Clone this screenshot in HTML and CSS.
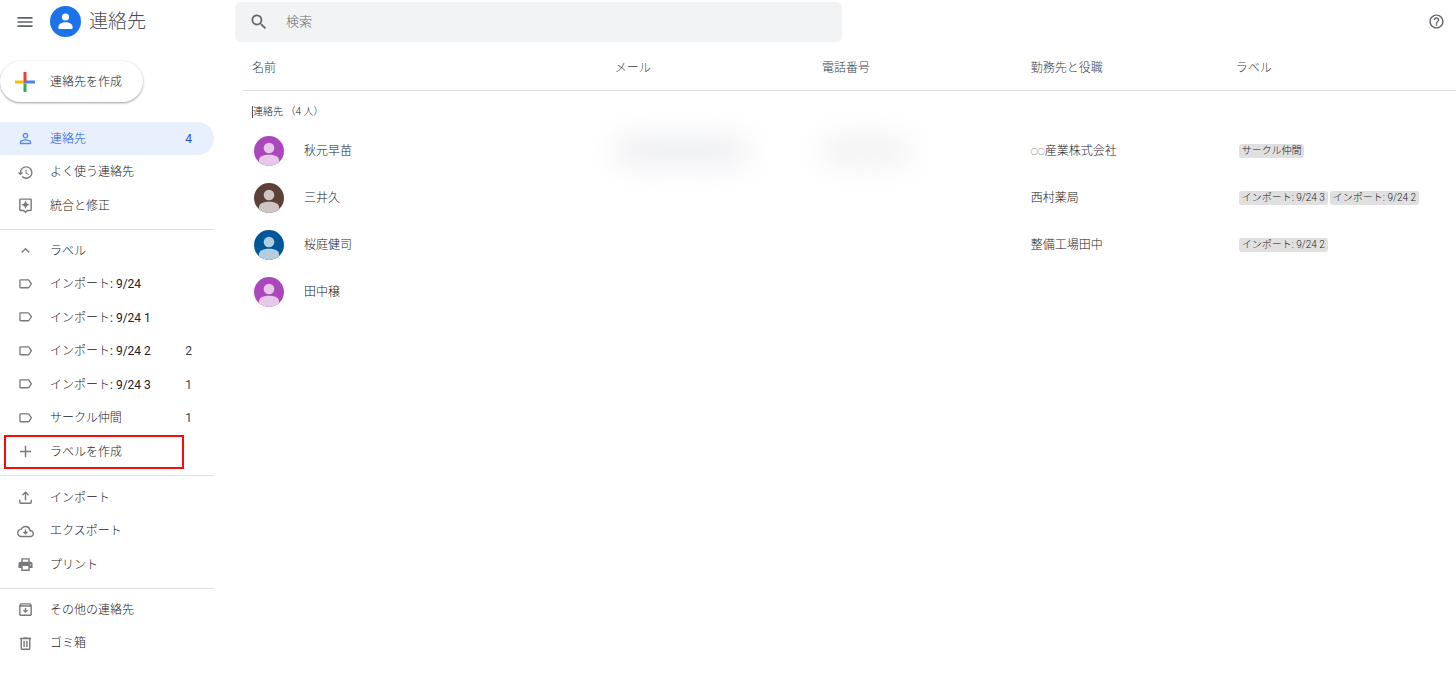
FILE: index.html
```html
<!DOCTYPE html>
<html lang="ja">
<head>
<meta charset="utf-8">
<meta name="viewport" content="width=device-width, initial-scale=1">
<title>連絡先</title>
<link rel="stylesheet" href="styles.css">
</head>
<body>
<svg class="defs" aria-hidden="true">
  <symbol id="label" viewBox="-1 0 26 26"><path d="M4.500 6h11.600a1.500 1.500 0 0 1 1.200.6L21 12l-3.700 5.400a1.500 1.500 0 0 1-1.200.6H4.500a1 1 0 0 1-1-1V7a1 1 0 0 1 1-1z" fill="none" stroke="currentColor" stroke-width="2"/></symbol>
  <symbol id="avatar" viewBox="0 0 30 30"><circle cx="15" cy="12" r="5.300"/><path d="M5 26.200V24c0-3.600 5-5.200 10-5.200s10 1.600 10 5.200v2.200A15 15 0 0 1 5 26.200z"/></symbol>
</svg>

<header class="topbar">
  <div class="brand">
    <button class="icon-button" type="button" aria-label="メインメニュー">
      <svg class="icon-menu" viewBox="0 0 24 24"><path d="M3 18h18v-2H3v2zm0-5h18v-2H3v2zm0-7v2h18V6H3z"/></svg>
    </button>
    <a class="brand-link" href="#">
      <svg class="logo" viewBox="0 0 31 31"><circle cx="15.500" cy="15.500" r="15.500" fill="#1a73e8"/><circle cx="15.500" cy="11" r="3.600" fill="#fff"/><path d="M8.300 21.500c0-3.800 3.700-5.200 7.200-5.200s7.200 1.400 7.200 5.200c0 .9-.5 1.400-1.400 1.400H9.700c-.9 0-1.400-.5-1.400-1.400z" fill="#fff"/></svg>
      <span>連絡先</span>
    </a>
  </div>
  <form class="search" role="search">
    <button class="icon-button" type="button" aria-label="検索">
      <svg class="icon-search" viewBox="0 0 24 24"><path d="M15.500 14h-.79l-.28-.27A6.471 6.471 0 0 0 16 9.500 6.500 6.500 0 1 0 9.500 16c1.610 0 3.090-.59 4.230-1.570l.27.28v.79l5 4.990L20.490 19l-4.990-5zm-6 0C7.010 14 5 11.990 5 9.500S7.010 5 9.500 5 14 7.010 14 9.500 11.990 14 9.500 14z"/></svg>
    </button>
    <input class="search-input" type="text" placeholder="検索" aria-label="検索">
  </form>
  <button class="icon-button help" type="button" aria-label="ヘルプ">
    <svg class="icon" viewBox="0 0 24 24"><path d="M11 18h2v-2h-2v2zm1-16C6.480 2 2 6.480 2 12s4.480 10 10 10 10-4.480 10-10S17.520 2 12 2zm0 18c-4.410 0-8-3.590-8-8s3.590-8 8-8 8 3.590 8 8-3.590 8-8 8zm0-14c-2.210 0-4 1.790-4 4h2c0-1.100.9-2 2-2s2 .9 2 2c0 2-3 1.750-3 5h2c0-2.250 3-2.500 3-5 0-2.210-1.790-4-4-4z"/></svg>
  </button>
</header>

<div class="layout">
  <aside class="sidebar">
    <button class="create" type="button">
      <svg class="plus" viewBox="0 0 20 20"><path fill="#fbbc04" d="M0 8.500h8.500v3H0z"/><path fill="#4285f4" d="M10 8.500h10v3H8.500z"/><path fill="#ea4335" d="M8.500 0h3v8.500l-3 3z"/><path fill="#34a853" d="M8.500 11.500h3V20h-3z"/></svg>
      <span>連絡先を作成</span>
    </button>
    <nav>
      <ul class="section">
        <li><a class="item active" href="#"><svg class="icon" viewBox="0 0 24 24"><path d="M12 5.900a2.100 2.100 0 1 1 0 4.200 2.100 2.100 0 0 1 0-4.200m0 9c2.970 0 6.100 1.460 6.100 2.100v1.100H5.900V17c0-.64 3.130-2.100 6.100-2.100M12 4C9.790 4 8 5.790 8 8s1.790 4 4 4 4-1.790 4-4-1.790-4-4-4zm0 9c-2.670 0-8 1.340-8 4v3h16v-3c0-2.660-5.330-4-8-4z"/></svg><span>連絡先</span><span class="count">4</span></a></li>
        <li><a class="item" href="#"><svg class="icon" viewBox="0 0 24 24"><path d="M13 3a9 9 0 0 0-9 9H1l3.890 3.890.07.14L9 12H6c0-3.870 3.130-7 7-7s7 3.130 7 7-3.130 7-7 7c-1.930 0-3.680-.79-4.940-2.060l-1.420 1.420A8.954 8.954 0 0 0 13 21a9 9 0 0 0 0-18zm-1 5v5l4.280 2.540.72-1.210-3.500-2.080V8H12z"/></svg><span>よく使う連絡先</span></a></li>
        <li><a class="item" href="#"><svg class="icon" viewBox="0 0 24 24"><path d="M19 2H5a2 2 0 0 0-2 2v14c0 1.100.9 2 2 2h4l3 3 3-3h4c1.100 0 2-.9 2-2V4c0-1.100-.9-2-2-2zm0 16h-4.830L12 20.170 9.830 18H5V4h14v14zm-7-1 1.880-4.120L18 11l-4.120-1.880L12 5l-1.880 4.120L6 11l4.120 1.880z"/></svg><span>統合と修正</span></a></li>
      </ul>
      <ul class="section">
        <li><button class="item" type="button" aria-expanded="true"><svg class="icon" viewBox="0 0 24 24"><path d="m12 8-6 6 1.410 1.410L12 10.830l4.590 4.580L18 14z"/></svg><span>ラベル</span></button></li>
        <li><a class="item" href="#"><svg class="icon"><use href="#label"/></svg><span>インポート<b>: 9/24</b></span></a></li>
        <li><a class="item" href="#"><svg class="icon"><use href="#label"/></svg><span>インポート<b>: 9/24 1</b></span></a></li>
        <li><a class="item" href="#"><svg class="icon"><use href="#label"/></svg><span>インポート<b>: 9/24 2</b></span><span class="count">2</span></a></li>
        <li><a class="item" href="#"><svg class="icon"><use href="#label"/></svg><span>インポート<b>: 9/24 3</b></span><span class="count">1</span></a></li>
        <li><a class="item" href="#"><svg class="icon"><use href="#label"/></svg><span>サークル仲間</span><span class="count">1</span></a></li>
        <li><button class="item marked" type="button"><svg class="icon" viewBox="0 0 24 24"><path d="M20 13h-7v7h-2v-7H4v-2h7V4h2v7h7z"/></svg><span>ラベルを作成</span></button></li>
      </ul>
      <ul class="section tools">
        <li><button class="item" type="button"><svg class="icon" viewBox="0 0 24 24"><path d="M11 16V6.800L8.400 9.400 7 8l5-5 5 5-1.400 1.400L13 6.800V16zM3 15h2v4h14v-4h2v4a2 2 0 0 1-2 2H5a2 2 0 0 1-2-2z"/></svg><span>インポート</span></button></li>
        <li><button class="item" type="button"><svg class="icon" viewBox="0 0 24 24"><path d="M19.350 10.040A7.490 7.490 0 0 0 12 4C9.110 4 6.600 5.640 5.350 8.040A5.994 5.994 0 0 0 0 14c0 3.310 2.690 6 6 6h13c2.760 0 5-2.240 5-5 0-2.640-2.050-4.780-4.650-4.960zM19 18H6c-2.210 0-4-1.790-4-4 0-2.050 1.530-3.760 3.560-3.970l1.070-.11.5-.95A5.469 5.469 0 0 1 12 6c2.620 0 4.880 1.860 5.390 4.430l.3 1.500 1.530.11A2.980 2.980 0 0 1 22 15c0 1.650-1.350 3-3 3zM13 9h-2v3.500H8l4 4 4-4h-3z"/></svg><span>エクスポート</span></button></li>
        <li><button class="item" type="button"><svg class="icon" viewBox="0 0 24 24"><path d="M19 8h-1V3H6v5H5c-1.660 0-3 1.340-3 3v6h4v4h12v-4h4v-6c0-1.660-1.340-3-3-3zM8 5h8v3H8V5zm8 14H8v-5h8v5zm2-6.500a1 1 0 1 1 2 0 1 1 0 0 1-2 0z"/></svg><span>プリント</span></button></li>
      </ul>
      <ul class="section">
        <li><a class="item" href="#"><svg class="icon" viewBox="0 0 24 24"><path d="m20.540 5.230-1.390-1.680A1.450 1.450 0 0 0 18 3H6c-.47 0-.88.210-1.160.550L3.460 5.230C3.170 5.570 3 6.020 3 6.500V19c0 1.100.9 2 2 2h14c1.100 0 2-.9 2-2V6.500c0-.48-.17-.93-.46-1.270zM6.240 5h11.520l.83 1H5.420l.82-1zM5 19V8h14v11H5zm8-9h-2v3H8l4 4 4-4h-3z"/></svg><span>その他の連絡先</span></a></li>
        <li><a class="item" href="#"><svg class="icon" viewBox="0 0 24 24"><path d="M15 4V3H9v1H4v2h1v13c0 1.100.9 2 2 2h10c1.100 0 2-.9 2-2V6h1V4h-5zm2 15H7V6h10v13zM9 8h2v9H9zm4 0h2v9h-2z"/></svg><span>ゴミ箱</span></a></li>
      </ul>
    </nav>
  </aside>

  <main class="main">
    <table class="contacts">
      <colgroup><col class="col-name"><col class="col-mail"><col class="col-phone"><col class="col-org"><col></colgroup>
      <thead>
        <tr><th scope="col">名前</th><th scope="col">メール</th><th scope="col">電話番号</th><th scope="col">勤務先と役職</th><th scope="col">ラベル</th></tr>
      </thead>
      <tbody>
        <tr class="group"><th colspan="5" scope="rowgroup"><span class="group-title">連絡先 （4 人）</span></th></tr>
        <tr><td><div class="person"><svg class="avatar purple"><use href="#avatar"/></svg><span>秋元早苗</span></div></td><td><div class="redacted mail"></div></td><td><div class="redacted phone"></div></td><td><span class="circles">○○</span>産業株式会社</td><td><div class="chips"><span class="chip">サークル仲間</span></div></td></tr>
        <tr><td><div class="person"><svg class="avatar brown"><use href="#avatar"/></svg><span>三井久</span></div></td><td></td><td></td><td>西村薬局</td><td><div class="chips"><span class="chip">インポート: 9/24 3</span><span class="chip">インポート: 9/24 2</span></div></td></tr>
        <tr><td><div class="person"><svg class="avatar blue"><use href="#avatar"/></svg><span>桜庭健司</span></div></td><td></td><td></td><td>整備工場田中</td><td><div class="chips"><span class="chip">インポート: 9/24 2</span></div></td></tr>
        <tr><td><div class="person"><svg class="avatar purple"><use href="#avatar"/></svg><span>田中穣</span></div></td><td></td><td></td><td></td><td></td></tr>
      </tbody>
    </table>
  </main>
</div>
</body>
</html>
```

FILE: styles.css
```css
* { box-sizing: border-box; }

body {
  margin: 0;
  background: #fff;
  color: #202124;
  font: 300 12px/18px Roboto, "Noto Sans CJK JP", sans-serif;
}

button, input { font: inherit; color: inherit; }
button { border: 0; padding: 0; background: none; cursor: pointer; }
a { color: inherit; text-decoration: none; }
svg { display: block; flex: none; fill: currentColor; }
.defs { position: absolute; width: 0; height: 0; }
.icon { width: 17px; height: 17px; color: #77797d; }

/* Top bar */
.topbar { display: flex; align-items: center; height: 43px; padding-right: 11px; }
.brand { display: flex; align-items: center; gap: 15px; flex: none; width: 235px; padding-left: 15px; }
.brand-link { display: flex; align-items: center; gap: 8px; font-size: 19px; line-height: 28px; color: #4a4d51; }
.icon-button { color: #5f6368; }
.icon-menu { width: 20px; height: 20px; }
.logo { width: 31px; height: 31px; }
.search {
  display: flex;
  align-items: center;
  gap: 17px;
  flex: 0 1 50%;
  max-width: 607px;
  height: 40px;
  padding-left: 14px;
  border-radius: 6px;
  background: #f1f3f4;
}
.icon-search { width: 20px; height: 20px; }
.search-input { flex: 1; min-width: 0; padding: 0; border: 0; outline: 0; background: none; font-size: 13px; }
.search-input::placeholder { color: #66696d; opacity: 1; }
.help { margin-left: auto; }
.help .icon { color: #5f6368; }

/* Sidebar */
.layout { display: flex; gap: 29px; }
.sidebar { flex: none; width: 214px; padding-top: 18px; }
.create {
  display: flex;
  align-items: center;
  gap: 15px;
  height: 41px;
  margin-bottom: 20px;
  padding: 0 21px 0 15px;
  border-radius: 21px;
  background: #fff;
  box-shadow: 0 1px 2px rgba(60, 64, 67, .35), 0 1px 3px rgba(60, 64, 67, .2);
}
.plus { width: 20px; height: 20px; }
.section { margin: 0; padding: 0; list-style: none; }
.section + .section { margin-top: 7px; padding-top: 4px; border-top: 1px solid #e0e0e0; }
.section + .tools { padding-top: 5px; }
.section li { position: relative; height: 33px; }
.section li:nth-child(even) { height: 34px; }
.item {
  display: flex;
  align-items: center;
  gap: 16px;
  width: 100%;
  height: 100%;
  padding: 0 22px 0 17px;
  border-radius: 0 17px 17px 0;
  text-align: left;
}
.item b { font-weight: 400; }
.count { margin-left: auto; font-weight: 400; color: #3c4043; }
.active, .active .count { color: #1a56d0; }
.active { background: #e8f0fe; }
.active .icon { color: #4f8af0; }
.marked::after {
  content: "";
  position: absolute;
  top: 0;
  bottom: -1px;
  left: 4px;
  right: 30px;
  border: 2px solid #fa0a0a;
}

/* Contact table */
.main { flex: 1; min-width: 0; padding-top: 4px; }
.contacts { width: 100%; border-collapse: collapse; table-layout: fixed; }
.col-name { width: 29.9%; }
.col-mail { width: 17.1%; }
.col-phone { width: 17.2%; }
.col-org { width: 16.9%; }
th, td { height: 47px; padding: 0 0 0 9px; text-align: left; font-weight: inherit; }
thead th { height: 43px; border-bottom: 1px solid #e0e0e0; color: #3c4043; }
.group th { height: 37px; padding-top: 6px; font-size: 10px; line-height: 12px; }
.group-title { display: inline-block; border-left: 1px solid #505357; }
.person { display: flex; align-items: center; gap: 20px; padding-left: 2px; }
.circles { font-size: 7px; line-height: 12px; vertical-align: 1px; }
.avatar { width: 30px; height: 30px; border-radius: 50%; }
.purple { background: #ab47bc; color: #e6c8eb; }
.brown { background: #5d4037; color: #cec5c3; }
.blue { background: #01579b; color: #b3cde1; }
.redacted { height: 24px; border-radius: 12px; background: #e9eaee; filter: blur(15px); }
.mail { width: 132px; }
.phone { width: 88px; background: #eeeeef; }
.chips { display: flex; gap: 2px; padding-left: 3px; }
.chip {
  padding: 0 3px;
  border-radius: 3px;
  background: #e0e0e0;
  font-size: 10px;
  line-height: 14px;
  white-space: nowrap;
}
```
